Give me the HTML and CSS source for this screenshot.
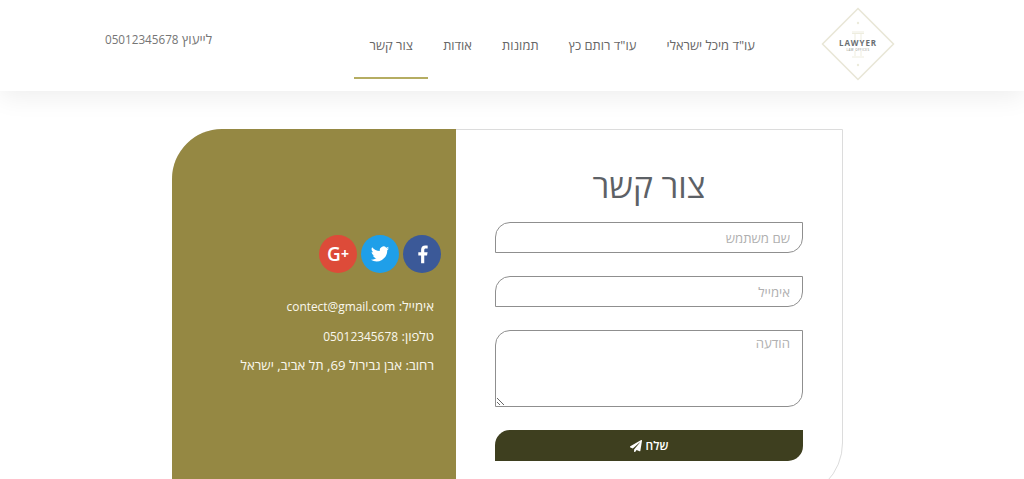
FILE: index.html
```html
<!DOCTYPE html>
<html lang="he" dir="rtl">
<head>
<meta charset="utf-8">
<title>צור קשר</title>
<link rel="stylesheet" href="styles.css">
</head>
<body>
<header class="topbar">
  <a class="logo" href="#">
    <svg width="74" height="74" viewBox="0 0 74 74" aria-hidden="true">
      <path class="logo-frame" d="M37 1.500 72.500 37 37 72.500 1.500 37Z"/>
      <path class="logo-pillar" d="M31 25h12M31 26.500h12M34 27v6M40 27v6M31 50h12M34 44v5M40 44v5"/>
      <circle class="logo-dot" cx="37" cy="16" r="1.200"/>
      <circle class="logo-dot" cx="37" cy="58" r="1.200"/>
      <text class="logo-title" x="37" y="38.500" text-anchor="middle">LAWYER</text>
      <text class="logo-sub" x="37" y="43.500" text-anchor="middle">LAW OFFICES</text>
    </svg>
  </a>
  <nav class="nav">
    <a class="nav-item" href="#">עו"ד מיכל ישראלי</a>
    <a class="nav-item" href="#">עו"ד רותם כץ</a>
    <a class="nav-item" href="#">תמונות</a>
    <a class="nav-item" href="#">אודות</a>
    <a class="nav-item is-active" href="#">צור קשר</a>
  </nav>
  <div class="advice">לייעוץ <span class="digits">05012345678</span></div>
</header>
<main class="page">
  <section class="card">
    <form class="form">
      <h1 class="title">צור קשר</h1>
      <input class="field" type="text" placeholder="שם משתמש">
      <input class="field" type="text" placeholder="אימייל">
      <textarea class="field field-area" placeholder="הודעה"></textarea>
      <button class="send" type="button">שלח
        <svg width="12" height="12" viewBox="0 0 512 512" aria-hidden="true"><path fill="#fff" d="M476 3 12 271c-18 10-16 36 3 44l106 44 287-253c5-5 13 2 8 8L175 405v87c0 24 29 34 44 16l63-77 125 52c14 6 31-3 33-19L512 28C515 8 494-7 476 3Z"/></svg>
      </button>
    </form>
    <aside class="info">
      <div class="socials">
        <a class="social social-fb" href="#"><svg width="21" height="21" viewBox="0 0 24 24" aria-hidden="true"><path fill="#fff" d="M14 22v-9h3.200l.6-3.700H14V7c0-1.100.4-1.800 1.900-1.800h2V2c-.4-.1-1.500-.2-2.800-.2-2.800 0-4.700 1.700-4.700 4.800v2.700H7.200V13h3.200v9Z"/></svg></a>
        <a class="social social-tw" href="#"><svg width="20" height="20" viewBox="0 0 24 24" aria-hidden="true"><path fill="#fff" d="M23 5.100c-.8.400-1.700.6-2.600.7.900-.6 1.600-1.400 2-2.500-.9.500-1.800.9-2.900 1.100a4.500 4.500 0 0 0-7.700 4.100C8 8.300 4.700 6.500 2.500 3.800c-1.200 2.100-.6 4.700 1.400 6-.7 0-1.400-.2-2-.6 0 2.200 1.500 4.100 3.600 4.500-.7.200-1.400.2-2 .1.600 1.800 2.200 3.100 4.200 3.100A9 9 0 0 1 1 18.800 12.800 12.800 0 0 0 20.700 7.400c.9-.6 1.700-1.400 2.300-2.300Z"/></svg></a>
        <a class="social social-gp" href="#"><span class="gplus">G<span class="gplus-mark">+</span></span></a>
      </div>
      <p class="line">אימייל: <span class="latin">contect@gmail.com</span></p>
      <p class="line">טלפון: <span class="latin">05012345678</span></p>
      <p class="line">רחוב: אבן גבירול 69, תל אביב, ישראל</p>
    </aside>
  </section>
</main>
</body>
</html>
```
FILE: styles.css
```css
* { box-sizing: border-box; }
html, body { margin: 0; height: 479px; overflow: hidden; background: #fff; }
body { font-family: "Open Sans", "Noto Sans", "Liberation Sans", sans-serif; color: #666; }
a { text-decoration: none; color: inherit; }

.topbar {
  height: 91px;
  display: flex;
  align-items: flex-start;
  background: #fff;
  box-shadow: 0 6px 24px rgba(0, 0, 0, .07);
  padding-right: 129px;
}
.logo { display: block; margin-top: 7px; width: 74px; height: 74px; flex: none; }
.logo-frame { fill: none; stroke: #e8e6d6; stroke-width: 1.500; }
.logo-pillar { fill: none; stroke: #eeeddf; stroke-width: 1; }
.logo-dot { fill: #ecebdc; }
.logo-title { font: 700 8px "Open Sans", sans-serif; letter-spacing: .9px; fill: #6a6f73; }
.logo-sub { font: 400 3px "Open Sans", sans-serif; letter-spacing: .4px; fill: #8a8c80; }

.nav { display: flex; margin-right: 51px; height: 79px; }
.nav-item {
  display: block;
  padding: 36px 15.100px 0;
  font-size: 12.900px;
  font-weight: 500;
  line-height: 18px;
  color: #666;
  white-space: nowrap;
  border-bottom: 2px solid transparent;
}
.nav-item.is-active { border-bottom-color: #b5ad62; }
.advice { margin-right: auto; padding: 30px 0 0; margin-left: 105px; font-size: 13.200px; line-height: 18px; color: #757575; white-space: nowrap; }
.digits { font-size: 11.700px; }

.page { padding: 38px 181px 0 172px; }
.card {
  display: flex;
  height: 370px;
  border: 1px solid #dcdcdc;
  border-bottom-right-radius: 56px;
  border-top-left-radius: 50px;
  background: #fff;
}
.form {
  width: 386px;
  flex: none;
  padding: 0 39px;
  display: flex;
  flex-direction: column;
}
.title { margin: 33px 0 15px; text-align: center; font-size: 33.500px; line-height: 44px; font-weight: 500; color: #5d6166; }
.field {
  display: block;
  width: 100%;
  height: 31px;
  margin: 0 0 23px;
  padding: 0 12px;
  font: 400 13.200px/20px "Open Sans", "Noto Sans", sans-serif;
  color: #555;
  background: #fff;
  border: 1px solid #8f8f8f;
  border-radius: 0;
  border-top-left-radius: 15px;
  border-bottom-right-radius: 15px;
  outline: none;
}
.field::placeholder { color: #b0b0b0; opacity: 1; }
.field-area { height: 77px; padding-top: 2px; }
.send {
  display: flex;
  align-items: center;
  justify-content: center;
  gap: 4px;
  width: 100%;
  height: 31px;
  border: 0;
  border-top-left-radius: 15px;
  border-bottom-right-radius: 15px;
  background: #3e3f1f;
  color: #fff;
  font: 600 12px "Open Sans", "Noto Sans", sans-serif;
}
.info {
  flex: 1;
  margin: -1px 0 -1px -1px;
  background: #958843;
  border-top-left-radius: 50px;
  padding: 106px 15px 0 8px;
  color: #fff;
}
.socials { display: flex; gap: 4px; margin-bottom: 23px; }
.social { width: 38px; height: 38px; border-radius: 50%; display: flex; align-items: center; justify-content: center; }
.social-fb { background: #3b5998; }
.social-tw { background: #1f9fe9; }
.social-gp { background: #dd4b39; }
.gplus { direction: ltr; color: #fff; font: 600 19px/1 "Open Sans", sans-serif; }
.gplus-mark { font-size: 14px; font-weight: 700; vertical-align: 2px; }
.line { margin: 0 7px 9.500px 0; font-size: 13.200px; line-height: 20px; color: #faf8ee; white-space: nowrap; }
.latin { font-size: 11.900px; }
```
